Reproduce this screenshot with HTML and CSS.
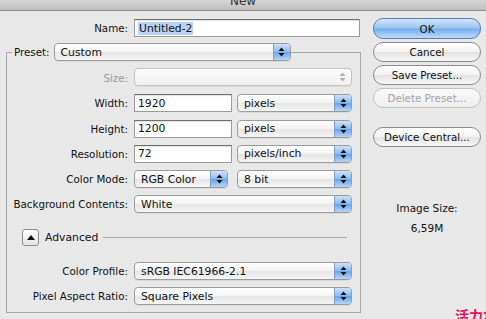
FILE: index.html
```html
<!DOCTYPE html>
<html lang="en">
  <head>
    <meta charset="UTF-8" />
    <meta name="viewport" content="width=device-width, initial-scale=1.0" />
    <title>New</title>
    <link rel="stylesheet" href="styles.css">
  </head>
  <body>
    <div class="titlebar"><span>New</span></div>

    <div class="dialog">
      <div class="left">
        <div class="name-row">
          <label>Name:</label>
          <div class="field name"><span class="sel">Untitled-2</span></div>
        </div>

        <fieldset class="preset">
          <legend>
            <label>Preset:</label>
            <div class="popup preset-popup"><span>Custom</span><i class="step"></i></div>
          </legend>

          <div class="rows">
            <label class="dim">Size:</label>
            <div class="popup wide disabled"><span></span><i class="step"></i></div>

            <label>Width:</label>
            <div class="field num">1920</div>
            <div class="popup unit"><span>pixels</span><i class="step"></i></div>

            <label>Height:</label>
            <div class="field num">1200</div>
            <div class="popup unit"><span>pixels</span><i class="step"></i></div>

            <label>Resolution:</label>
            <div class="field num">72</div>
            <div class="popup unit"><span>pixels/inch</span><i class="step"></i></div>

            <label>Color Mode:</label>
            <div class="popup mode"><span>RGB Color</span><i class="step"></i></div>
            <div class="popup unit"><span>8 bit</span><i class="step"></i></div>

            <label>Background Contents:</label>
            <div class="popup wide"><span>White</span><i class="step"></i></div>
          </div>

          <div class="advanced">
            <div class="disclose"></div>
            <span>Advanced</span>
            <div class="rule"></div>
          </div>

          <div class="rows adv-rows">
            <label>Color Profile:</label>
            <div class="popup wide"><span>sRGB IEC61966-2.1</span><i class="step"></i></div>

            <label>Pixel Aspect Ratio:</label>
            <div class="popup wide"><span>Square Pixels</span><i class="step"></i></div>
          </div>
        </fieldset>
      </div>

      <div class="right">
        <button class="btn default">OK</button>
        <button class="btn">Cancel</button>
        <button class="btn">Save Preset...</button>
        <button class="btn" disabled>Delete Preset...</button>
        <button class="btn central">Device Central...</button>

        <div class="image-size">
          <p>Image Size:</p>
          <p>6,59M</p>
        </div>
      </div>
    </div>

    <div class="watermark">活力盒子</div>
  </body>
</html>
```

FILE: styles.css
```css
* {
  margin: 0;
  padding: 0;
  box-sizing: border-box;
}
body {
  font-family: "DejaVu Sans", sans-serif;
  font-size: 10.3px;
  color: #111;
  background: #e8e8e8;
  width: 486px;
  height: 319px;
  overflow: hidden;
  position: relative;
}
.titlebar {
  height: 11px;
  background: linear-gradient(#d6d6d6, #bfbfbf);
  border-bottom: 1px solid #8c8c8c;
  text-align: center;
  overflow: hidden;
}
.titlebar span {
  display: block;
  font-size: 12px;
  line-height: 12px;
  color: #333;
  margin-top: -5px;
}
.dialog {
  display: flex;
}
.left {
  width: 361px;
}
.name-row {
  display: flex;
  align-items: center;
  margin-top: 8px;
  height: 18px;
}
.name-row label {
  width: 128px;
  text-align: right;
  margin-right: 6px;
}
.field {
  height: 18px;
  background: #fff;
  border: 1px solid #9a9a9a;
  border-top-color: #6e6e6e;
  box-shadow: inset 0 1px 1px rgba(0, 0, 0, 0.12);
  padding-left: 3px;
  display: flex;
  align-items: center;
  font-size: 10.8px;
}
.field.name {
  width: 226px;
}
.sel {
  background: #b7d3f7;
  padding: 0 1px;
}
.field.num {
  width: 98px;
}
.preset {
  margin-left: 6px;
  margin-top: 6px;
  width: 355px;
  border: 1px solid #a8a8a8;
  padding: 0 0 7px 0;
}
.preset legend {
  display: flex;
  align-items: center;
  margin-left: 5px;
  padding-left: 2px;
}
.preset legend label {
  margin-right: 4px;
}
.popup {
  height: 18px;
  display: flex;
  align-items: stretch;
  border: 1px solid #9b9b9b;
  border-radius: 4px;
  background: linear-gradient(#ffffff, #f3f3f3 50%, #e6e6e6 52%, #f5f5f5);
  box-shadow: 0 1px 0 rgba(0, 0, 0, 0.06);
  overflow: hidden;
}
.popup span {
  flex: 1;
  padding-left: 6px;
  display: flex;
  align-items: center;
  font-size: 10.8px;
}
.step {
  width: 17px;
  border-left: 1px solid #7f9fc8;
  background:
    url("data:image/svg+xml,%3Csvg xmlns='http://www.w3.org/2000/svg' width='7' height='10'%3E%3Cpath d='M3.5 0.5 L6.5 4 L0.5 4 Z M0.5 6 L6.5 6 L3.5 9.5 Z' fill='%23111'/%3E%3C/svg%3E") center no-repeat,
    linear-gradient(#cfe2f8, #8dbcf0 48%, #6aa5ea 52%, #b4d4f7);
}
.preset-popup {
  width: 237px;
}
.rows {
  display: grid;
  grid-template-columns: 127px 103px 115px;
  grid-auto-rows: 18px;
  row-gap: 7.3px;
  align-items: center;
  margin-top: 8px;
}
.rows label {
  text-align: right;
  padding-right: 6px;
  white-space: nowrap;
}
.rows .dim {
  color: #9a9a9a;
}
.popup.wide {
  grid-column: 2 / 4;
  width: 218px;
}
.popup.unit {
  width: 115px;
}
.popup.mode {
  width: 94px;
}
.popup.disabled {
  border-color: #c4c4c4;
  background: linear-gradient(#fbfbfb, #f0f0f0);
  margin-bottom: 1.5px;
}
.popup.disabled .step {
  border-left: none;
  background: url("data:image/svg+xml,%3Csvg xmlns='http://www.w3.org/2000/svg' width='7' height='10'%3E%3Cpath d='M3.5 0.5 L6.5 4 L0.5 4 Z M0.5 6 L6.5 6 L3.5 9.5 Z' fill='%23b0b0b0'/%3E%3C/svg%3E") center no-repeat;
}
.advanced {
  display: flex;
  align-items: center;
  margin: 16px 0 0 15px;
  height: 17px;
}
.disclose {
  width: 17px;
  height: 17px;
  border: 1px solid #8f8f8f;
  border-radius: 3px;
  background:
    url("data:image/svg+xml,%3Csvg xmlns='http://www.w3.org/2000/svg' width='8' height='5'%3E%3Cpath d='M4 0 L8 5 L0 5 Z' fill='%23111'/%3E%3C/svg%3E") center no-repeat,
    linear-gradient(#ffffff, #e2e2e2);
}
.advanced span {
  margin-left: 6px;
  font-size: 10.8px;
}
.rule {
  width: 244px;
  margin-left: 5px;
  border-top: 1px solid #a8a8a8;
}
.adv-rows {
  margin-top: 16px;
  row-gap: 7px;
}
.right {
  margin-left: 12px;
  margin-top: 7px;
  width: 108px;
  display: flex;
  flex-direction: column;
  gap: 3px;
}
.btn {
  height: 20px;
  border: 1px solid #8a8a8a;
  border-radius: 10px;
  background: linear-gradient(#ffffff, #f2f2f2 50%, #e3e3e3 52%, #f7f7f7);
  font-family: inherit;
  font-size: 10.3px;
  color: #111;
}
.btn.default {
  height: 21px;
  border-color: #5a7eb4;
  background: linear-gradient(#d5e6fa, #98c3f2 48%, #74adee 52%, #bfdcfa);
}
.btn:disabled {
  color: #a4a4a4;
  border-color: #c2c2c2;
  background: linear-gradient(#fafafa, #eeeeee);
}
.btn.central {
  margin-top: 16px;
}
.image-size {
  margin-top: 48px;
  text-align: center;
  line-height: 20px;
  font-size: 10.5px;
}
.watermark {
  position: absolute;
  left: 455px;
  top: 305px;
  font-family: "Noto Sans CJK SC", sans-serif;
  font-weight: 700;
  font-size: 14px;
  color: #e0105a;
  white-space: nowrap;
}
```
